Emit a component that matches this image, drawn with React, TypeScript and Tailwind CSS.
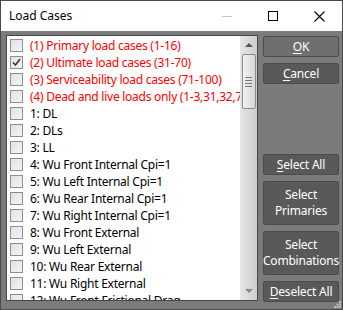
import React from "react"

const rows: { label: string; red?: boolean; checked?: boolean }[] = [
  { label: "(1) Primary load cases (1-16)", red: true },
  { label: "(2) Ultimate load cases (31-70)", red: true, checked: true },
  { label: "(3) Serviceability load cases (71-100)", red: true },
  { label: "(4) Dead and live loads only (1-3,31,32,71)", red: true },
  { label: "1: DL" },
  { label: "2: DLs" },
  { label: "3: LL" },
  { label: "4: Wu Front Internal Cpi=1" },
  { label: "5: Wu Left Internal Cpi=1" },
  { label: "6: Wu Rear Internal Cpi=1" },
  { label: "7: Wu Right Internal Cpi=1" },
  { label: "8: Wu Front External" },
  { label: "9: Wu Left External" },
  { label: "10: Wu Rear External" },
  { label: "11: Wu Right External" },
  { label: "12: Wu Front Frictional Drag" },
]

function CheckBox({ checked }: { checked?: boolean }) {
  return (
    <div className="flex h-[13px] w-[13px] shrink-0 items-center justify-center border border-[#8e8e8e] bg-gradient-to-br from-[#e2e2e2] to-[#f4f4f4]">
      {checked && (
        <svg width="9" height="9" viewBox="0 0 9 9">
          <path d="M1 4.5 L3.5 7 L8 1" fill="none" stroke="#3a3a3a" strokeWidth="1.6" />
        </svg>
      )}
    </div>
  )
}

function Btn({
  children,
  tall,
  light,
}: {
  children: React.ReactNode
  tall?: boolean
  light?: boolean
}) {
  return (
    <div
      className={`flex w-[76px] shrink-0 flex-col items-center justify-center rounded-[2px] border border-[#4b4b4b] text-[12px] leading-[16px] tracking-[-0.2px] text-white ${
        tall ? "h-[44px]" : "h-[21px]"
      } ${light ? "bg-[#6f6f6f]" : "bg-[#595959]"}`}
    >
      {children}
    </div>
  )
}

export default function App() {
  return (
    <div
      className="flex h-[310px] w-[343px] flex-col overflow-hidden border border-[#4a4a4a] bg-[#7b7b7b]"
      style={{ fontFamily: '"Noto Sans", "Liberation Sans", sans-serif' }}
    >
      {/* Title bar */}
      <div className="flex h-[30px] shrink-0 items-center bg-white pl-[8px] text-[12px] text-black">
        <span className="flex-1">Load Cases</span>
        <div className="flex h-full items-center">
          <div className="flex w-[46px] justify-center">
            <div className="h-px w-[10px] bg-[#c4c4c4]" />
          </div>
          <div className="flex w-[46px] justify-center">
            <div className="h-[10px] w-[10px] border border-black" />
          </div>
          <div className="flex w-[46px] justify-center">
            <svg width="11" height="11" viewBox="0 0 11 11">
              <path d="M0.5 0.5 L10.5 10.5 M10.5 0.5 L0.5 10.5" stroke="#000" strokeWidth="1.1" />
            </svg>
          </div>
        </div>
      </div>

      {/* Body */}
      <div className="relative flex h-[278px] shrink-0 gap-[5px] pl-[5px] pr-[3px] pt-[4px]">
        {/* List box */}
        <div className="flex h-[266px] w-[252px] overflow-hidden border border-[#474747] bg-white">
          <div className="min-w-0 flex-1 overflow-hidden pt-px">
            {rows.map((r, i) => (
              <div key={i} className="flex h-[17px] items-center pl-[3px]">
                <CheckBox checked={r.checked} />
                <span
                  className={`ml-[7px] whitespace-nowrap text-[12px] tracking-[-0.25px] ${
                    r.red ? "text-[#ff0000]" : "text-black"
                  }`}
                >
                  {r.label}
                </span>
              </div>
            ))}
          </div>
          {/* Scrollbar */}
          <div className="flex w-[17px] shrink-0 flex-col items-center bg-gradient-to-r from-[#e6e6e6] to-[#cdcdcd]">
            <div className="flex h-[18px] items-center justify-center">
              <svg width="8" height="4" viewBox="0 0 8 4">
                <path d="M0 4 L4 0 L8 4 Z" fill="#555" />
              </svg>
            </div>
            <div className="flex h-[55px] w-[14px] flex-col items-center justify-center gap-[2px] rounded-[2px] border border-[#8a8a8a] bg-gradient-to-r from-[#f3f3f3] to-[#d6d6d6]">
              <div className="h-px w-[7px] bg-[#777]" />
              <div className="h-px w-[7px] bg-[#777]" />
              <div className="h-px w-[7px] bg-[#777]" />
              <div className="h-px w-[7px] bg-[#777]" />
            </div>
            <div className="flex-1" />
            <div className="flex h-[18px] items-center justify-center">
              <svg width="8" height="4" viewBox="0 0 8 4">
                <path d="M0 0 L4 4 L8 0 Z" fill="#888" />
              </svg>
            </div>
          </div>
        </div>

        {/* Buttons */}
        <div className="flex h-[267px] flex-col pt-px">
          <div className="flex flex-col gap-[6px]">
            <Btn light>
              <span>
                <span className="underline underline-offset-2">O</span>K
              </span>
            </Btn>
            <Btn>
              <span>
                <span className="underline underline-offset-2">C</span>ancel
              </span>
            </Btn>
          </div>
          <div className="flex-1" />
          <div className="flex flex-col gap-[6px]">
            <Btn>
              <span>
                <span className="underline underline-offset-2">S</span>elect All
              </span>
            </Btn>
            <Btn tall>
              <span>Select</span>
              <span>Primaries</span>
            </Btn>
            <Btn tall>
              <span>Select</span>
              <span>Combinations</span>
            </Btn>
            <Btn>
              <span>
                <span className="underline underline-offset-2">D</span>eselect All
              </span>
            </Btn>
          </div>
        </div>

        {/* Resize grip */}
        <svg className="absolute bottom-[1px] right-[1px]" width="7" height="7" viewBox="0 0 7 7">
          <rect x="5" y="0" width="2" height="2" fill="#bdbdbd" />
          <rect x="2.5" y="2.5" width="2" height="2" fill="#bdbdbd" />
          <rect x="5" y="2.5" width="2" height="2" fill="#bdbdbd" />
          <rect x="0" y="5" width="2" height="2" fill="#bdbdbd" />
          <rect x="2.5" y="5" width="2" height="2" fill="#bdbdbd" />
          <rect x="5" y="5" width="2" height="2" fill="#bdbdbd" />
        </svg>
      </div>
    </div>
  )
}
